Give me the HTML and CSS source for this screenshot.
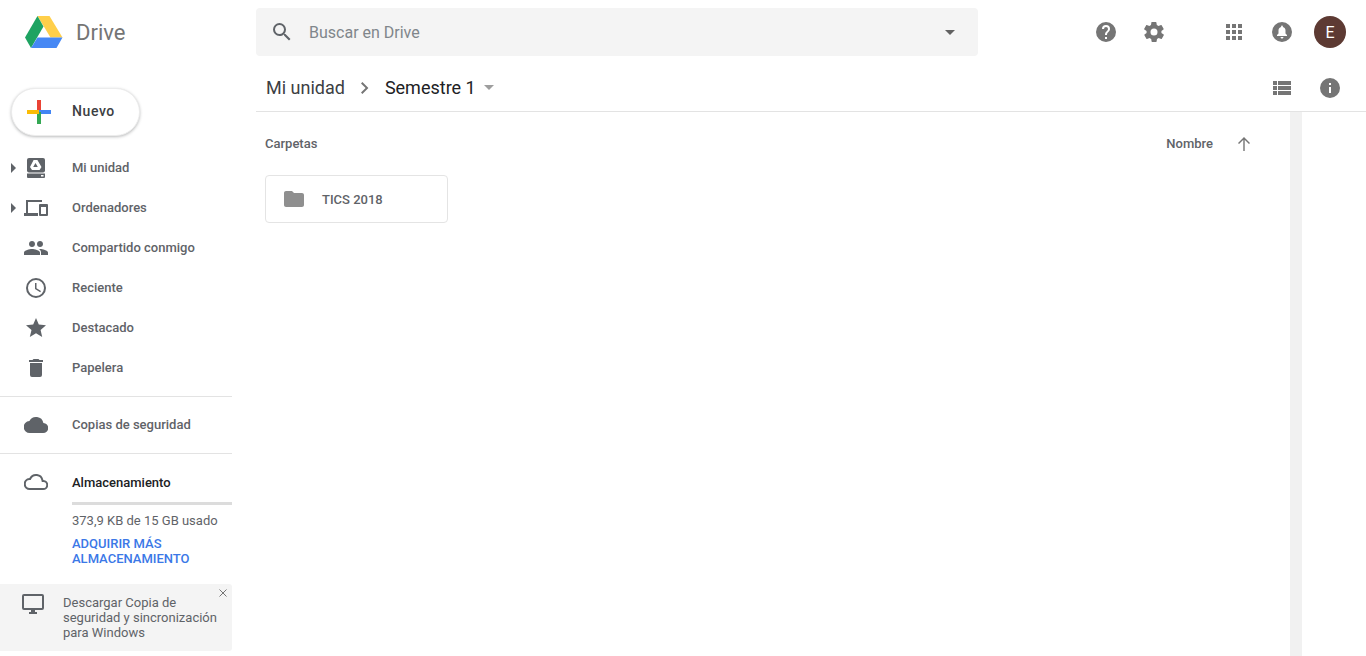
FILE: index.html
```html
<!DOCTYPE html>
<html lang="es">
<head>
<meta charset="utf-8">
<title>Drive</title>
<link rel="stylesheet" href="styles.css">
</head>
<body>
<div class="app">
  <aside class="sidebar">
    <div class="brand">
      <svg class="brand-logo" width="40" height="36" viewBox="0 0 40 36">
        <path fill="#ffcf4a" d="M13.500 2h12l13 21.500H26.500z"/>
        <path fill="#1ea362" d="M13.500 2 1 23.500 7 34l12.500-21.500z"/>
        <path fill="#4688f4" d="M13.500 23.500h25L32.500 34H7z"/>
      </svg>
      <span class="brand-name">Drive</span>
    </div>
    <button class="new-btn">
      <svg width="24" height="24" viewBox="0 0 24 24">
        <rect x="10" y="0" width="4" height="12" fill="#ea4335"/>
        <rect x="12" y="10" width="12" height="4" fill="#4285f4"/>
        <rect x="10" y="12" width="4" height="12" fill="#34a853"/>
        <rect x="0" y="10" width="12" height="4" fill="#fbbc05"/>
      </svg>
      <span>Nuevo</span>
    </button>
    <nav class="nav">
      <a class="nav-item"><i class="caret"></i>
        <svg class="nav-icon" viewBox="0 0 24 24"><rect x="3" y="2" width="18" height="14.500" rx="2" fill="#5f6368"/><path fill="#5f6368" d="M3 17.500h18V21a1 1 0 0 1-1 1H4a1 1 0 0 1-1-1z"/><rect x="17" y="19" width="2.500" height="1.500" fill="#fff"/><path fill="#fff" fill-rule="evenodd" d="M9.600 4h3.800l4.100 7-1.900 3H8l-2-3zM11.500 7 9.200 11h4.600z"/></svg>
        <span>Mi unidad</span></a>
      <a class="nav-item"><i class="caret"></i>
        <svg class="nav-icon" viewBox="0 0 24 24"><path fill="#5f6368" d="M2 4h16v2H4v11h10v3H0v-3h2zM16 8h7a1 1 0 0 1 1 1v10a1 1 0 0 1-1 1h-7a1 1 0 0 1-1-1V9a1 1 0 0 1 1-1zm1 3v7h5v-7z"/></svg>
        <span>Ordenadores</span></a>
      <a class="nav-item">
        <svg class="nav-icon" viewBox="0 0 24 24"><path fill="#5f6368" d="M16 11c1.700 0 3-1.300 3-3s-1.300-3-3-3-3 1.300-3 3 1.300 3 3 3zm-8 0c1.700 0 3-1.300 3-3S9.700 5 8 5 5 6.300 5 8s1.300 3 3 3zm0 2c-2.300 0-8 1.200-8 3.500V19h16v-2.500C16 14.200 10.300 13 8 13zm8 0h-1c1.200.8 2 2 2 3.500V19h7v-2.500c0-2.300-5.700-3.500-8-3.500z"/></svg>
        <span>Compartido conmigo</span></a>
      <a class="nav-item">
        <svg class="nav-icon" viewBox="0 0 24 24"><path fill="#5f6368" d="M12 2a10 10 0 1 0 0 20 10 10 0 0 0 0-20zm0 18a8 8 0 1 1 0-16 8 8 0 0 1 0 16zm.5-13H11v6l5.200 3.200.8-1.300-4.500-2.700z"/></svg>
        <span>Reciente</span></a>
      <a class="nav-item">
        <svg class="nav-icon" viewBox="0 0 24 24"><path fill="#5f6368" d="M12 17.300 18.200 21l-1.600-7L22 9.200l-7.200-.6L12 2 9.200 8.600 2 9.200 7.500 14l-1.700 7z"/></svg>
        <span>Destacado</span></a>
      <a class="nav-item">
        <svg class="nav-icon" viewBox="0 0 24 24"><path fill="#5f6368" d="M6 19a2 2 0 0 0 2 2h8a2 2 0 0 0 2-2V7H6zM19 4h-3.500l-1-1h-5l-1 1H5v2h14z"/></svg>
        <span>Papelera</span></a>
    </nav>
    <div class="separated">
      <a class="nav-item">
        <svg class="nav-icon" viewBox="0 0 24 24"><path fill="#5f6368" d="M19.400 10A7.500 7.500 0 0 0 5.400 8 6 6 0 0 0 6 20h13a5 5 0 0 0 .4-10z"/></svg>
        <span>Copias de seguridad</span></a>
    </div>
    <div class="storage">
      <div class="nav-item storage-head">
        <svg class="nav-icon" viewBox="0 0 24 24"><path fill="#5f6368" d="M19.400 10A7.500 7.500 0 0 0 5.400 8 6 6 0 0 0 6 20h13a5 5 0 0 0 .4-10zM19 18H6a4 4 0 0 1-.4-8h1.100l.5-1a5.500 5.500 0 0 1 10.300 1.400l.3 1.500h1.600A3 3 0 0 1 19 18z"/></svg>
        <span>Almacenamiento</span>
      </div>
      <div class="storage-body">
        <div class="storage-bar"></div>
        <p class="storage-used">373,9 KB de 15 GB usado</p>
        <a class="storage-link">ADQUIRIR MÁS ALMACENAMIENTO</a>
      </div>
    </div>
    <div class="promo">
      <svg class="promo-icon" width="24" height="24" viewBox="0 0 24 24"><path fill="#5f6368" d="M21 2H3a2 2 0 0 0-2 2v12a2 2 0 0 0 2 2h7v2H8v2h8v-2h-2v-2h7a2 2 0 0 0 2-2V4a2 2 0 0 0-2-2zm0 14H3V4h18z"/></svg>
      <p>Descargar Copia de seguridad y sincronización para Windows</p>
      <svg class="promo-close" width="8" height="8" viewBox="0 0 8 8"><path stroke="#757575" stroke-width="1" fill="none" d="M.5.500l7 7M7.500.500l-7 7"/></svg>
    </div>
  </aside>
  <main class="main">
    <header class="topbar">
      <div class="search">
        <svg width="24" height="24" viewBox="0 0 24 24"><path fill="#5f6368" d="M15.500 14h-.79l-.28-.27A6.471 6.471 0 0 0 16 9.500 6.500 6.500 0 1 0 9.500 16c1.610 0 3.090-.59 4.230-1.570l.27.280v.79l5 4.990L20.490 19l-4.990-5zm-6 0C7.010 14 5 11.990 5 9.500S7.010 5 9.500 5 14 7.010 14 9.500 11.990 14 9.500 14z"/></svg>
        <span class="search-text">Buscar en Drive</span>
        <i class="tri search-tri"></i>
      </div>
      <div class="top-icons">
        <svg class="tool" viewBox="0 0 24 24"><path fill="#757575" d="M12 2a10 10 0 1 0 0 20 10 10 0 0 0 0-20zm1 17h-2v-2h2zm2.100-7.700-.9.900c-.7.700-1.200 1.300-1.200 2.800h-2v-.5c0-1.100.5-2.100 1.200-2.800l1.200-1.300c.4-.3.600-.8.600-1.400a2 2 0 0 0-4 0H8a4 4 0 0 1 8 0c0 .9-.4 1.700-.9 2.300z"/></svg>
        <svg class="tool" viewBox="0 0 24 24"><path fill="#757575" d="M19.400 13a7.500 7.500 0 0 0 0-2l2.100-1.600c.2-.2.200-.4.100-.6l-2-3.500c-.1-.2-.4-.3-.6-.2l-2.500 1a7.300 7.300 0 0 0-1.700-1l-.4-2.600c0-.3-.2-.5-.5-.5h-4c-.3 0-.5.200-.5.400l-.4 2.700c-.6.200-1.200.6-1.700 1l-2.500-1c-.2-.1-.5 0-.6.200l-2 3.500c-.1.200-.1.500.1.600L4.600 11a7.900 7.900 0 0 0 0 2l-2.100 1.600c-.2.200-.2.400-.1.600l2 3.500c.1.200.4.300.6.200l2.500-1c.5.400 1.100.7 1.700 1l.4 2.600c0 .3.2.5.5.5h4c.3 0 .5-.2.500-.4l.4-2.700c.6-.2 1.200-.6 1.700-1l2.500 1c.2.100.5 0 .6-.2l2-3.500c.1-.2.100-.5-.1-.6zM12 15.500a3.500 3.500 0 1 1 0-7 3.500 3.500 0 0 1 0 7z"/></svg>
        <svg class="tool tool-apps" viewBox="0 0 24 24"><path fill="#757575" d="M4 4h4v4H4zM10 4h4v4h-4zM16 4h4v4h-4zM4 10h4v4H4zM10 10h4v4h-4zM16 10h4v4h-4zM4 16h4v4H4zM10 16h4v4h-4zM16 16h4v4h-4z"/></svg>
        <svg class="tool" viewBox="0 0 24 24"><path fill="#757575" fill-rule="evenodd" d="M12 2a10 10 0 1 0 0 20 10 10 0 0 0 0-20zm0 16.500c-.8 0-1.500-.6-1.500-1.500h3c0 .9-.7 1.500-1.500 1.500zm5-2.500H7v-1l1.500-1.500V10.500c0-1.800 1-3.200 2.600-3.600V6.500a.9.900 0 0 1 1.800 0v.4c1.600.4 2.600 1.800 2.600 3.600v3l1.500 1.500z"/></svg>
        <div class="avatar">E</div>
      </div>
    </header>
    <div class="toolbar">
      <div class="crumbs">
        <span>Mi unidad</span>
        <svg width="24" height="24" viewBox="0 0 24 24"><path fill="#757575" d="M9.400 6 8 7.400l4.600 4.600L8 16.600 9.400 18l6-6z"/></svg>
        <span class="crumb-current">Semestre 1</span>
        <i class="tri crumb-tri"></i>
      </div>
      <div class="view-icons">
        <svg class="tool" viewBox="0 0 24 24"><path fill="#757575" d="M3 5h4v4H3zM8 5h13v4H8zM3 10h4v4H3zM8 10h13v4H8zM3 15h4v4H3zM8 15h13v4H8z"/></svg>
        <svg class="tool" viewBox="0 0 24 24"><path fill="#757575" d="M12 2a10 10 0 1 0 0 20 10 10 0 0 0 0-20zm1 15h-2v-6h2zm0-8h-2V7h2z"/></svg>
      </div>
    </div>
    <div class="workspace">
      <section class="content">
        <div class="list-head">
          <span>Carpetas</span>
          <div class="sort">
            <span>Nombre</span>
            <svg width="16" height="16" viewBox="0 0 16 16"><path fill="#757575" d="M7.300 15V3.700L3 8 2 7l6-6 6 6-1 1-4.300-4.300V15z"/></svg>
          </div>
        </div>
        <div class="folder">
          <svg width="24" height="24" viewBox="0 0 24 24"><path fill="#8f8f8f" d="M10 4H4c-1.100 0-2 .9-2 2v12c0 1.100.9 2 2 2h16c1.100 0 2-.9 2-2V8c0-1.100-.9-2-2-2h-8l-2-2z"/></svg>
          <span>TICS 2018</span>
        </div>
      </section>
      <div class="scroll-strip"></div>
      <div class="side-gap"></div>
    </div>
  </main>
</div>
</body>
</html>
```
FILE: styles.css
```css
* { box-sizing: border-box; }
html, body { margin: 0; height: 100%; overflow: hidden; background: #fff; }
body { font-family: Roboto, "Liberation Sans", sans-serif; color: #5f6368; }
p { margin: 0; }

.app { display: flex; height: 656px; }

.sidebar { width: 232px; flex: none; display: flex; flex-direction: column; }
.brand { height: 64px; display: flex; align-items: center; padding: 0 0 0 24px; flex: none; }
.brand-logo { flex: none; }
.brand-name { margin-left: 12px; font-size: 22px; color: #757575; }

.new-btn {
  margin: 24px 0 0 11px; width: 129px; height: 48px; flex: none;
  display: flex; align-items: center; padding: 0 0 0 15px;
  background: #fff; border: 1px solid #ececec; border-radius: 24px;
  box-shadow: 0 1px 3px rgba(60,64,67,.35);
  font-family: inherit; font-size: 14px; font-weight: 500; color: #3c4043; letter-spacing: .6px;
}
.new-btn span { margin: 0 0 2px 21px; }

.nav { margin-top: 12px; }
.nav-item {
  position: relative; display: flex; align-items: center; height: 40px;
  padding-left: 24px; font-size: 13px; font-weight: 500; color: #5f6368;
}
.nav-item span { margin-bottom: 2px; }
.nav-icon { width: 24px; height: 24px; flex: none; margin-right: 24px; }
.caret {
  position: absolute; left: 11px; top: 15px;
  border-left: 5px solid #5f6368; border-top: 5px solid transparent; border-bottom: 5px solid transparent;
}

.separated { margin-top: 8px; padding: 8px 0 0; height: 58px; border-top: 1px solid #e3e3e3; border-bottom: 1px solid #e3e3e3; flex: none; }

.storage { flex: none; padding-top: 8px; height: 130px; }
.storage-head { color: #202124; }
.storage-head span { margin-bottom: 0; }
.storage-body { padding-left: 72px; }
.storage-bar { height: 3px; background: #dcdcdc; margin-top: 0; }
.storage-used { margin-top: 8px; font-size: 13px; font-weight: 400; line-height: 15px; color: #5f6368; }
.storage-link { display: block; margin-top: 8px; font-size: 13px; font-weight: 500; line-height: 15px; color: #3b78e7; }

.promo {
  position: relative; display: flex; flex: none; height: 67px; background: #f4f4f4;
  padding: 8px 12px 0 21px; border-radius: 0 3px 3px 0;
}
.promo-icon { flex: none; margin-right: 18px; }
.promo p { font-size: 13px; line-height: 15px; color: #5f6368; padding-top: 3px; }
.promo-close { position: absolute; top: 5px; right: 5px; }

.main { flex: 1; min-width: 0; display: flex; flex-direction: column; padding-left: 24px; }

.topbar { height: 64px; flex: none; display: flex; align-items: center; }
.search {
  width: 722px; height: 48px; flex: none; background: #f4f4f4; border-radius: 4px;
  display: flex; align-items: center; padding: 0 23px 0 14px;
}
.search-text { margin-left: 15px; font-size: 16px; color: #80868b; flex: 1; }
.tri { display: block; width: 0; height: 0; border-left: 5px solid transparent; border-right: 5px solid transparent; }
.search-tri { border-top: 5px solid #616161; }

.top-icons { flex: 1; display: flex; align-items: center; padding-left: 116px; }
.tool { width: 24px; height: 24px; flex: none; }
.top-icons .tool { margin-right: 24px; }
.top-icons .tool-apps { margin-left: 32px; }
.avatar {
  width: 32px; height: 32px; margin-left: -4px; border-radius: 50%; background: #5d3a33; color: #fff;
  display: flex; align-items: center; justify-content: center; font-size: 16px; flex: none;
}

.toolbar {
  height: 48px; flex: none; display: flex; align-items: center; justify-content: space-between;
  border-bottom: 1px solid #e3e3e3; padding: 0 24px 0 10px;
}
.crumbs { display: flex; align-items: center; font-size: 18px; color: #3c4043; }
.crumbs svg { margin: 0 8px 0 8px; }
.crumb-current { color: #202124; }
.crumb-tri { margin-left: 8px; border-top: 5px solid #9e9e9e; }
.view-icons { display: flex; gap: 24px; }

.workspace { flex: 1; display: flex; min-height: 0; }
.content { flex: 1; padding: 0 38px 0 9px; min-width: 0; }
.list-head {
  display: flex; justify-content: space-between; align-items: center; height: 63px;
  font-size: 13px; font-weight: 500; color: #5f6368;
}
.sort { display: flex; align-items: center; gap: 23px; }
.folder {
  width: 183px; height: 48px; display: flex; align-items: center; padding-left: 16px;
  border: 1px solid #e4e4e4; border-radius: 4px; font-size: 13px; font-weight: 500; color: #5f6368;
}
.folder span { margin-left: 16px; }
.scroll-strip { width: 12px; flex: none; background: #f1f1f1; }
.side-gap { width: 64px; flex: none; }
```
